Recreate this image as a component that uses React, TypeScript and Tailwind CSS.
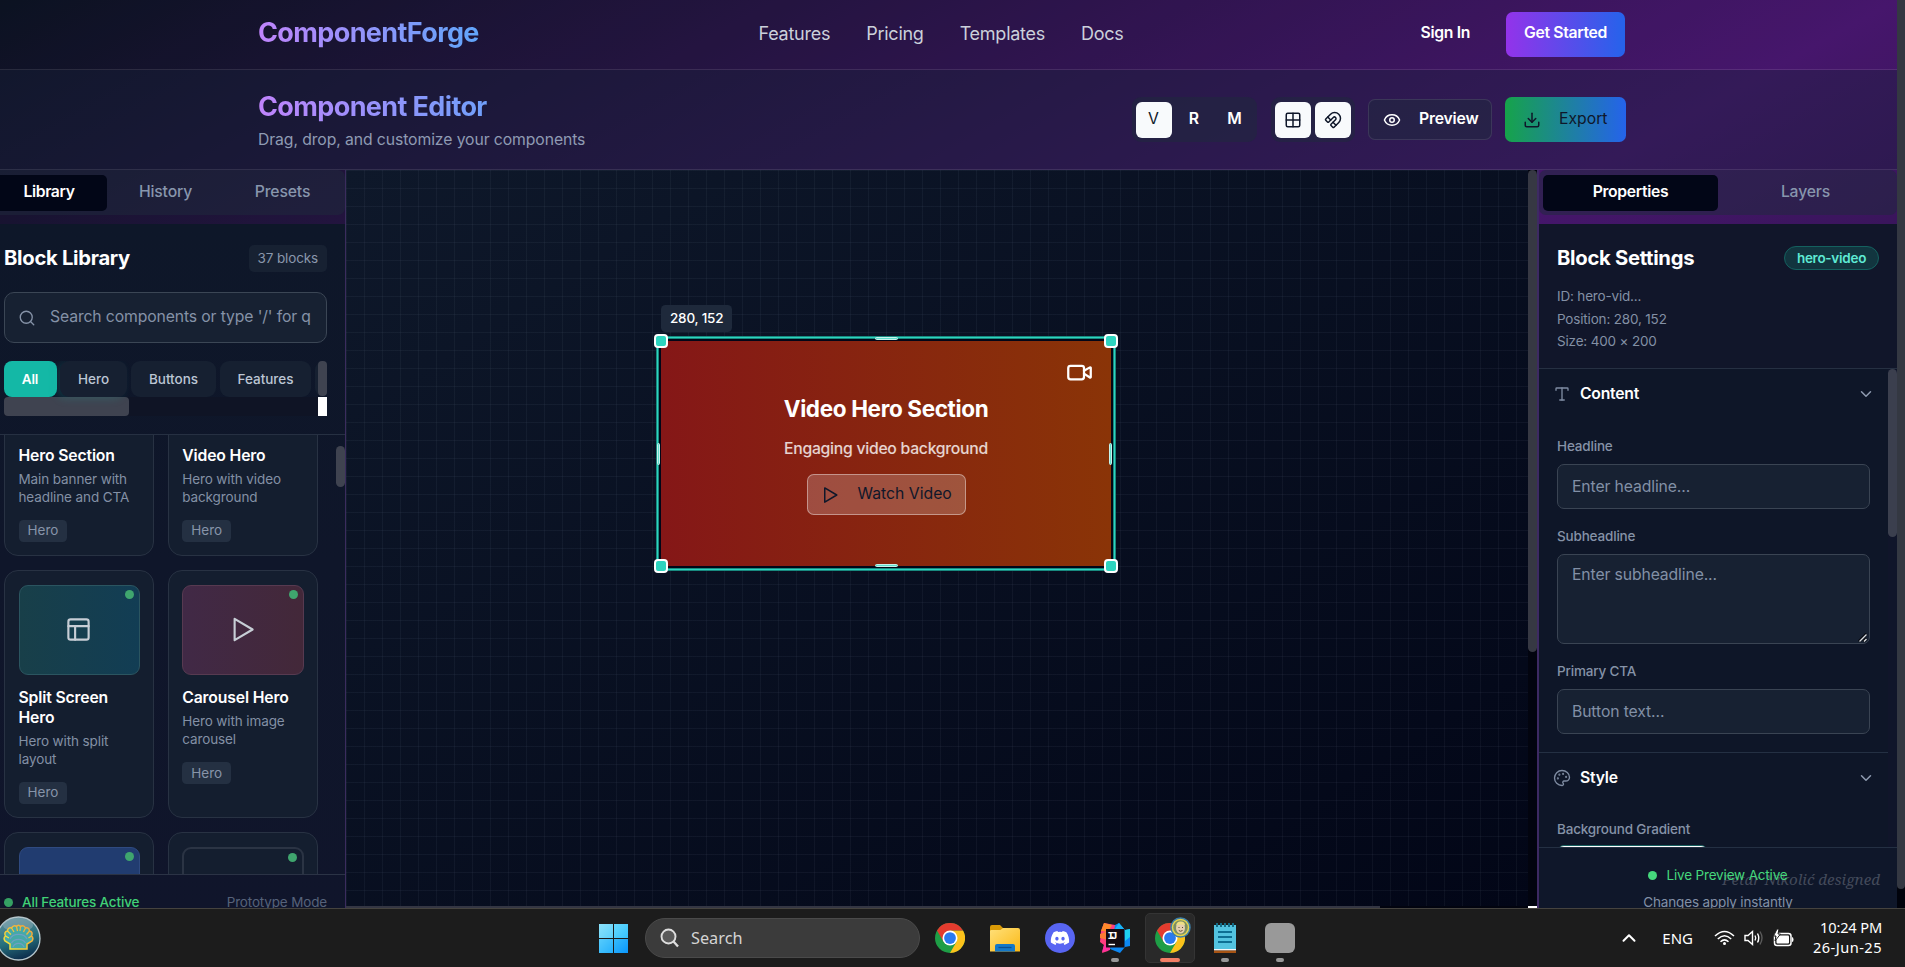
import React from "react";
import {
  ChevronDown,
  ChevronUp,
  Download,
  Eye,
  Grid2x2,
  Magnet,
  Palette,
  PanelsTopLeft,
  Play,
  Search,
  Type,
  Video,
} from "lucide-react";

/* ---------- header ---------- */

function SiteHeader() {
  return (
    <header className="flex h-[70px] w-[1897px] shrink-0 border-b border-white/10 bg-black/20">
      <div className="ml-[257px] flex w-[1368px] items-center justify-between pl-[1px]">
        <div className="w-[500px] pb-[3px]">
          <span className="inline-block bg-[linear-gradient(to_right,#c084fc,#60a5fa)] bg-clip-text text-[27px] leading-[36px] font-bold tracking-[-0.023em] text-transparent">
            ComponentForge
          </span>
        </div>
        <nav className="flex w-[366px] gap-[36px] pb-[2px] text-[18px] leading-[27px] tracking-[-0.014em] text-[#cbd0db]">
          <span>Features</span>
          <span>Pricing</span>
          <span>Templates</span>
          <span>Docs</span>
        </nav>
        <div className="flex w-[500px] items-center justify-end gap-[36px] pb-[1px] text-[15.75px] font-semibold tracking-[-0.022em] text-white">
          <span className="pb-[2px]">Sign In</span>
          <button className="flex h-[45px] w-[119px] items-center justify-center rounded-[6.75px] bg-[linear-gradient(to_right,#9333ea,#2563eb)] pb-[2px] whitespace-nowrap">
            Get Started
          </button>
        </div>
      </div>
    </header>
  );
}

function EditorHeader() {
  return (
    <div className="flex h-[100px] w-[1897px] shrink-0 border-b border-white/10 bg-[#0f172a]/50">
      <div className="ml-[257px] flex w-[1369px] items-center justify-between pl-[1px]">
        <div className="flex flex-col items-start">
          <h1 className="bg-[linear-gradient(to_right,#c084fc,#60a5fa_120%)] bg-clip-text text-[27px] leading-[36px] font-bold tracking-[-0.023em] text-transparent">
            Component Editor
          </h1>
          <p className="mt-[4px] text-[15.75px] leading-[22px] tracking-[-0.006em] text-[#8f9bb3]">
            Drag, drop, and customize your components
          </p>
        </div>
        <div className="flex items-center">
          <div className="flex h-[45px] items-center gap-[4.5px] rounded-[9px] bg-[#1e293b]/50 px-[4px] text-[15.75px] font-semibold text-white">
            <span className="flex h-[36px] w-[36px] items-center justify-center rounded-[6px] bg-[#f8fafc] pb-[2px] font-normal text-[#0f172a]">
              V
            </span>
            <span className="flex h-[36px] w-[36px] items-center justify-center pb-[2px]">R</span>
            <span className="flex h-[36px] w-[36px] items-center justify-center pb-[2px]">M</span>
          </div>
          <div className="ml-[14px] flex h-[45px] items-center gap-[4.5px] rounded-[9px] bg-[#1e293b]/50 px-[4px] text-[#0f172a]">
            <span className="flex h-[36px] w-[36px] items-center justify-center rounded-[6px] bg-[#f8fafc]">
              <Grid2x2 size={18} />
            </span>
            <span className="flex h-[36px] w-[36px] items-center justify-center rounded-[6px] bg-[#f8fafc]">
              <Magnet size={18} />
            </span>
          </div>
          <button className="ml-[13px] flex h-[41px] w-[124px] items-center rounded-[7px] border border-white/10 bg-[#1e293b]/50 pl-[14px] text-white">
            <Eye size={18} />
            <span className="ml-[18px] pb-[2px] text-[15.75px] font-semibold tracking-[-0.012em]">Preview</span>
          </button>
          <button className="ml-[13px] flex h-[45px] w-[121px] items-center rounded-[6.75px] bg-[linear-gradient(to_right,#16a34a,#2563eb)] pl-[18px] text-[#0f172a]">
            <Download size={18} />
            <span className="ml-[18px] pb-[2px] text-[15.75px]">Export</span>
          </button>
        </div>
      </div>
    </div>
  );
}

/* ---------- left sidebar ---------- */

type Block = {
  name: string;
  text: string;
  thumb: string;
  icon?: React.ReactNode;
};

const blocks: Block[] = [
  { name: "Hero Section", text: "Main banner with headline and CTA", thumb: "border bg-[#27325a]" },
  { name: "Video Hero", text: "Hero with video background", thumb: "border bg-[#4a2530]" },
  {
    name: "Split Screen Hero",
    text: "Hero with split layout",
    thumb: "border border-[#2b5560] bg-[linear-gradient(to_right,#183f49,#123d54)]",
    icon: <PanelsTopLeft size={27} strokeWidth={1.9} />,
  },
  {
    name: "Carousel Hero",
    text: "Hero with image carousel",
    thumb: "border border-[#573a50] bg-[linear-gradient(to_right,#412946,#432839)]",
    icon: (
      <svg width="27" height="27" viewBox="0 0 24 24" fill="none" stroke="currentColor" strokeWidth="1.9" strokeLinejoin="round">
        <path d="M5 2.500 21 12 5 21.500Z" />
      </svg>
    ),
  },
  { name: "Button", text: "Primary action", thumb: "border border-[#2f4a80] bg-[#213c70]" },
  { name: "Outline Button", text: "Secondary action", thumb: "border-2 border-[#2b3444]" },
];

function BlockCard({ block }: { block: Block }) {
  return (
    <div className="flex flex-col items-start rounded-[14px] border border-[#283243] bg-[#141e2f] p-[13.5px]">
      <div
        className={`flex h-[90px] w-full items-start justify-center rounded-[9px] text-[#c7ced6] ${block.thumb}`}
      >
        <div className="flex h-[88px] w-full items-center justify-center pl-[13px]">
          <div className="flex flex-1 justify-center">{block.icon}</div>
          <div className="mt-[4px] mr-[5px] h-[9px] w-[9px] shrink-0 self-start rounded-full bg-[#3fa56e]" />
        </div>
      </div>
      <h3 className="mt-[13.5px] text-[15.75px] leading-[19.7px] font-semibold tracking-[-0.01em] text-white">
        {block.name}
      </h3>
      <p className="mt-[4.5px] text-[13.5px] leading-[18px] tracking-[-0.008em] text-[#8390a5]">{block.text}</p>
      <span className="mt-[13.5px] flex h-[22px] items-center rounded-[4.5px] bg-[#243042] px-[9px] text-[13.5px] text-[#8794a9]">
        Hero
      </span>
    </div>
  );
}

function LibraryPanel() {
  return (
    <aside className="flex h-full w-[346px] shrink-0 flex-col overflow-hidden border-r border-[#3b2c5e]">
      <div className="h-[54px] shrink-0 bg-black/20">
        <div className="flex h-[45px] items-center rounded-r-[7px] bg-[#1e293b]/50 text-[15.75px] font-medium tracking-[-0.01em] text-[#8896ad]">
          <div className="flex h-[36px] w-[107px] items-center justify-center rounded-r-[5px] bg-[#020617] pr-[9px] pb-[2px] font-semibold tracking-[-0.025em] text-white">
            Library
          </div>
          <div className="flex w-[117px] justify-center pb-[2px]">History</div>
          <div className="flex w-[117px] justify-center pb-[2px]">Presets</div>
        </div>
      </div>

      <div className="flex min-h-0 flex-1 flex-col bg-[linear-gradient(#0e1729,#10152b)]">
        <div className="h-[211px] shrink-0 border-b border-[#263042] pr-[18px] pl-[4px]">
          <div className="flex h-[68px] items-center justify-between">
            <h2 className="text-[20.25px] font-bold tracking-[-0.015em] text-white">Block Library</h2>
            <span className="flex h-[27px] items-center rounded-[5px] bg-[#172132] px-[9px] text-[13.5px] tracking-[-0.01em] text-[#8a97ac]">
              37 blocks
            </span>
          </div>
          <div className="flex h-[51px] items-center overflow-hidden rounded-[10px] border border-[#3b4655] bg-[#172132] pl-[13px] whitespace-nowrap text-[#8592a7]">
            <Search size={18} strokeWidth={1.8} className="shrink-0" />
            <span className="ml-[14px] shrink-0 pb-[1px] text-[15.75px] leading-[24px] tracking-[-0.008em]">
              Search components or type '/' for q
            </span>
          </div>
          <div className="mt-[18px] flex">
            <div className="w-[314px] shrink-0 overflow-hidden">
              <div className="flex h-[36px] gap-[4px] text-[13.5px] leading-[36px] font-medium whitespace-nowrap text-[#bcc6d4]">
                <span className="w-[53px] shrink-0 rounded-[8px] bg-[#14b8a6] pr-[1px] text-center font-semibold tracking-[-0.01em] text-white">
                  All
                </span>
                <span className="-ml-[1px] w-[67px] shrink-0 rounded-[9px] bg-[#162031] text-center shadow-[-4px_2px_8px_rgba(20,184,166,0.18)]">
                  Hero
                </span>
                <span className="w-[85px] shrink-0 rounded-[9px] bg-[#162031] text-center">Buttons</span>
                <span className="w-[91px] shrink-0 rounded-[9px] bg-[#162031] text-center">Features</span>
                <span className="w-[60px] shrink-0 rounded-[9px] bg-[#162031]" />
              </div>
              <div className="h-[19px] bg-[#0f1425]">
                <div className="h-[19px] w-[125px] rounded-[4px] bg-[#3f4350]" />
              </div>
            </div>
            <div className="w-[9px]">
              <div className="h-[35px] rounded-[4px] bg-[#3f4350]" />
              <div className="mt-[1px] h-[19px] bg-white" />
            </div>
          </div>
        </div>

        <div className="flex h-[439px] shrink-0 overflow-hidden">
          <div className="-mt-[107.2px] grid h-[900px] w-[318px] shrink-0 auto-rows-min grid-cols-2 gap-x-[13.5px] gap-y-[14.1px] pl-[4px]">
            {blocks.map((block) => (
              <BlockCard key={block.name} block={block} />
            ))}
          </div>
          <div className="mt-[11px] ml-[18px] h-[41px] w-[9px] rounded-full bg-[#3f4350]" />
        </div>

        <div className="flex flex-1 items-start justify-between border-t border-[#2b3345] pt-[17px] pr-[18px] pl-[4px] text-[13.5px] leading-[20px] tracking-[-0.012em]">
          <span className="flex items-center gap-[9px] font-medium text-[#41d176]">
            <span className="h-[9px] w-[9px] rounded-full bg-[#35a163]" />
            All Features Active
          </span>
          <span className="text-[#56627a]">Prototype Mode</span>
        </div>
      </div>
    </aside>
  );
}

/* ---------- canvas ---------- */

function Handle({ place }: { place: string }) {
  return (
    <span
      className={`absolute h-[14px] w-[14px] rounded-[4px] border-2 border-white bg-[#2dd4bf] ${place}`}
    />
  );
}

function SelectedBlock() {
  return (
    <div className="absolute top-[171px] left-[315px] h-[225px] w-[450px] bg-[linear-gradient(to_right,#851717,#8a3407)] shadow-[0_0_0_2px_#020617,0_0_0_3px_#18897f,0_0_0_4px_#2dd4bf,0_0_0_5px_#18897f]">
      <div className="absolute -top-[36px] left-0 flex h-[27px] w-[71px] items-center rounded-[4.5px] bg-[#1e293b] pl-[9px] text-[13.5px] font-medium tracking-[-0.015em] whitespace-nowrap text-white">
        280, 152
      </div>
      <Video size={27} className="absolute top-[18px] right-[18px] text-white" />
      <div className="flex h-full flex-col items-center pt-[52px]">
        <h2 className="text-[22.5px] leading-[31px] font-bold tracking-[-0.016em] text-white">Video Hero Section</h2>
        <p className="mt-[14px] text-[15.75px] leading-[22px] font-medium tracking-[-0.017em] text-white/80">
          Engaging video background
        </p>
        <button className="mt-[14px] flex h-[41px] w-[159px] items-center rounded-[6.75px] border border-white/40 bg-white/20 pl-[13px] text-[15.75px] text-[#0f172a]">
          <svg width="18" height="18" viewBox="0 0 24 24" fill="none" stroke="currentColor" strokeWidth="2" strokeLinejoin="round">
            <path d="M5 2.500 21 12 5 21.500Z" />
          </svg>
          <span className="ml-[19px] pb-[2px] whitespace-nowrap">Watch Video</span>
        </button>
      </div>
      <span className="absolute -top-[4px] left-[214px] h-[3px] w-[23px] rounded-[2px] border border-[#c6f3ec] bg-[#5fdccb]" />
      <span className="absolute -bottom-[1px] left-[214px] h-[3px] w-[23px] rounded-[2px] border border-[#c6f3ec] bg-[#5fdccb]" />
      <span className="absolute top-[102px] -left-[4px] h-[22px] w-[3px] rounded-[2px] border border-[#c6f3ec] bg-[#5fdccb]" />
      <span className="absolute top-[102px] -right-[1px] h-[22px] w-[3px] rounded-[2px] border border-[#c6f3ec] bg-[#5fdccb]" />
      <Handle place="-top-[7px] -left-[7px]" />
      <Handle place="-top-[7px] -right-[7px]" />
      <Handle place="-bottom-[7px] -left-[7px]" />
      <Handle place="-bottom-[7px] -right-[7px]" />
    </div>
  );
}

function Canvas() {
  return (
    <main className="flex h-full w-[1191px] shrink-0 flex-col bg-[#02040f]">
      <div className="flex h-[736px]">
        <div className="relative h-full w-[1182px] overflow-hidden bg-[linear-gradient(to_bottom_right,#0e182a,#020617)]">
          <div className="absolute inset-0 bg-[linear-gradient(rgba(148,163,184,0.065)_1px,transparent_1px),linear-gradient(90deg,rgba(148,163,184,0.065)_1px,transparent_1px)] bg-[length:18px_18px]" />
          <SelectedBlock />
        </div>
        <div className="w-[9px]">
          <div className="h-[482px] rounded-full bg-[#363843]" />
        </div>
      </div>
      <div className="flex h-[2px] justify-between">
        <div className="w-[1034px] bg-[#343643]" />
        <div className="w-[9px] bg-white" />
      </div>
    </main>
  );
}

/* ---------- right sidebar ---------- */

function SectionTitle({ icon, title }: { icon: React.ReactNode; title: string }) {
  return (
    <div className="flex h-[49px] items-center pr-[13px] pl-[14px]">
      <span className="flex w-[18px] justify-center text-[#7f8ca2]">{icon}</span>
      <span className="ml-[9px] text-[15.75px] font-semibold tracking-[-0.015em] text-white">{title}</span>
      <ChevronDown size={18} className="ml-auto text-[#8f9bb0]" />
    </div>
  );
}

function Field({ label, hint, tall }: { label: string; hint: string; tall?: boolean }) {
  return (
    <div className="mb-[18px]">
      <div className="mb-[9px] text-[13.5px] leading-[18px] font-medium tracking-[-0.013em] text-[#8592a7]">
        {label}
      </div>
      <div
        className={`relative rounded-[7px] border border-[#3a4453] bg-[#172132] px-[14px] text-[15.75px] leading-[24px] tracking-[-0.008em] text-[#8290a6] ${
          tall ? "h-[90px] pt-[8px]" : "h-[45px] pt-[10px]"
        }`}
      >
        {hint}
        {tall && (
          <svg className="absolute right-[1px] bottom-[1px]" width="10" height="9" viewBox="0 0 10 9">
            <path d="M1 8.5 8.5 1M5.5 8.5 8.5 5.5" stroke="#05070d" strokeWidth="3" />
            <path d="M1.5 8.5 8.5 1.5M6 8.5 8.5 6" stroke="#d8dce2" strokeWidth="1.4" />
          </svg>
        )}
      </div>
    </div>
  );
}

function PropertiesPanel() {
  return (
    <aside className="flex h-full w-[360px] shrink-0 flex-col overflow-hidden border-l-2 border-[#3d2a63]">
      <div className="h-[54px] shrink-0 bg-black/20">
        <div className="flex h-[45px] items-center rounded-[7px] bg-[#1e293b]/50 px-[4px] text-[15.75px] font-medium tracking-[-0.01em] text-[#8896ad]">
          <div className="flex h-[36px] w-[175px] items-center justify-center rounded-[5px] bg-[#020617] pb-[2px] font-semibold tracking-[-0.022em] text-white">
            Properties
          </div>
          <div className="flex flex-1 justify-center pb-[2px]">Layers</div>
        </div>
      </div>

      <div className="h-[145px] shrink-0 border-b border-[#263042] bg-[#11162a] px-[18px] pt-[20px]">
        <div className="flex h-[28px] items-center justify-between">
          <h2 className="text-[20.25px] font-bold tracking-[-0.015em] text-white">Block Settings</h2>
          <span className="flex h-[24px] w-[95px] items-center justify-center rounded-full border border-[#14615f] bg-[#12353f] text-[13.5px] font-semibold tracking-[-0.02em] text-[#5eead4]">
            hero-video
          </span>
        </div>
        <div className="mt-[13px] text-[13.5px] leading-[22.5px] tracking-[-0.013em] text-[#8390a5]">
          <p>ID: hero-vid...</p>
          <p>Position: 280, 152</p>
          <p>Size: 400 × 200</p>
        </div>
      </div>

      <div className="flex h-[478px] shrink-0 overflow-hidden bg-[#0e1628]">
        <div className="w-[349px]">
          <div className="h-[384px] border-b border-[#243043]">
            <SectionTitle icon={<Type size={18} strokeWidth={1.8} />} title="Content" />
            <div className="pt-[18.5px] pr-[18px] pl-[18px]">
              <Field label="Headline" hint="Enter headline..." />
              <Field label="Subheadline" hint="Enter subheadline..." tall />
              <Field label="Primary CTA" hint="Button text..." />
            </div>
          </div>
          <SectionTitle icon={<Palette size={18} strokeWidth={1.8} />} title="Style" />
          <div className="pt-[18px] pl-[18px]">
            <div className="text-[13.5px] leading-[18px] font-medium tracking-[-0.013em] text-[#8592a7]">
              Background Gradient
            </div>
            <div className="mt-[7px] h-[45px] w-[151px] rounded-[7px] border border-[#17605f] bg-white" />
          </div>
        </div>
        <div className="w-[9px] bg-[#10152a]">
          <div className="h-[168px] rounded-full bg-[#3b3f4e]" />
        </div>
      </div>

      <div className="relative flex flex-1 flex-col items-center overflow-hidden border-t border-[#243043] bg-[#0f172a] pt-[18px] text-[13.5px] leading-[18px] tracking-[-0.012em]">
        <div className="absolute top-[20px] right-[17px] font-['Noto_Serif','DejaVu_Serif',serif] text-[15.2px] leading-[22px] tracking-normal whitespace-nowrap text-[#434a5a] italic">
          Petar Nikolić designed
        </div>
        <span className="relative flex items-center gap-[9px] text-[#45d87c]">
          <span className="h-[9px] w-[9px] rounded-full bg-[#45d87c]" />
          Live Preview Active
        </span>
        <span className="relative mt-[9px] text-[#8290a6]">Changes apply instantly</span>
      </div>
    </aside>
  );
}

/* ---------- taskbar ---------- */

function ChromeIcon() {
  return (
    <svg width="30" height="30" viewBox="0 0 48 48" className="shrink-0">
      <circle cx="24" cy="24" r="24" fill="#1e9e46" />
      <path d="M24 12H44.8A24 24 0 0 1 24 48L34.4 30Z" fill="#fcc21b" />
      <path d="M3.2 12 13.6 30 24 24 24 12H44.8A24 24 0 0 0 3.2 12Z" fill="#e33b2e" />
      <circle cx="24" cy="24" r="12" fill="#fff" />
      <circle cx="24" cy="24" r="9.4" fill="#2a7af0" />
    </svg>
  );
}

function FolderIcon() {
  return (
    <svg width="30" height="30" viewBox="0 0 30 30">
      <path d="M0 4Q0 2 2 2H10L13 5H26V12H0Z" fill="#d99a06" />
      <path d="M0 8Q0 7 1.5 7H10.5L13 5H28Q30 5 30 7V28.5H0Z" fill="url(#folderFill)" />
      <path d="M5 28.5V23Q5 21 7 21H23Q25 21 25 23V28.5Z" fill="#1478c8" />
      <path d="M8.5 24.5H21.5" stroke="#0b4f92" strokeWidth="1.3" />
      <defs>
        <linearGradient id="folderFill" x1="0" y1="0" x2="1" y2="1">
          <stop offset="0" stopColor="#ffe07a" />
          <stop offset="1" stopColor="#fbb916" />
        </linearGradient>
      </defs>
    </svg>
  );
}

function DiscordIcon() {
  return (
    <svg width="30" height="30" viewBox="0 0 30 30">
      <circle cx="15" cy="15" r="15" fill="#5865f2" />
      <g transform="translate(5.8 5.8) scale(0.765)">
        <path
          fill="#fff"
          d="M20.317 4.37a19.8 19.8 0 0 0-4.885-1.515c-.21.375-.455.88-.608 1.25a18.3 18.3 0 0 0-5.487 0c-.16-.39-.405-.875-.617-1.25A19.7 19.7 0 0 0 3.677 4.37C.533 9.046-.32 13.58.1 18.058a19.9 19.9 0 0 0 5.993 3.03c.46-.63.873-1.295 1.226-1.994a12 12 0 0 1-1.872-.892l.372-.292a14.2 14.2 0 0 0 12.36 0l.373.292a12 12 0 0 1-1.873.892c.36.698.772 1.362 1.225 1.993a19.8 19.8 0 0 0 6.002-3.03c.5-5.177-.838-9.674-3.589-13.66ZM8.02 15.33c-1.183 0-2.157-1.085-2.157-2.419s.956-2.419 2.157-2.419c1.21 0 2.176 1.096 2.157 2.42 0 1.333-.956 2.418-2.157 2.418Zm7.975 0c-1.183 0-2.157-1.085-2.157-2.419s.955-2.419 2.157-2.419c1.21 0 2.176 1.096 2.157 2.42 0 1.333-.946 2.418-2.157 2.418Z"
        />
      </g>
    </svg>
  );
}

function IdeaIcon() {
  return (
    <svg width="30" height="30" viewBox="0 0 30 30">
      <path d="M4 0 15 2 17 15 8 28 2 30 4 22 0 19 1 8Z" fill="#ff3d7f" />
      <path d="M4 0 12 2 8 9 1 8Z" fill="#ff8a2b" />
      <path d="M0 11 8 8 8 17 0 15Z" fill="#fb7c35" />
      <path d="M2 29 4 22 10 20 10 27Z" fill="#ff2fa0" />
      <path d="M15 2 19 0 25 7 30 6 30 23 25 24 20 30 10 26 13 14Z" fill="#0d87f2" />
      <path d="M19 0 25 7 24 14 15 6Z" fill="#18b4f5" />
      <path d="M25 7 30 6 30 14 25 18Z" fill="#1ed0f0" />
      <rect x="6" y="6" width="18.500" height="18.500" fill="#120b12" />
      <path d="M8.500 21.500H15" stroke="#fff" strokeWidth="1.400" />
      <text
        x="7.600"
        y="15.800"
        fill="#fff"
        fontSize="11"
        fontWeight="700"
        fontFamily="'Liberation Mono', monospace"
        textLength="10"
      >
        IJ
      </text>
    </svg>
  );
}

function NotepadIcon() {
  return (
    <svg width="22" height="30" viewBox="0 0 22 30">
      <rect x="0" y="2" width="22" height="25" fill="#53c3e0" />
      <rect x="0" y="26" width="22" height="1.600" fill="#f3f6f8" />
      <rect x="0" y="27.600" width="22" height="2.400" fill="#a65313" />
      <path d="M3 0V4M7 0V4M11 0V4M15 0V4M19 0V4" stroke="#146c86" strokeWidth="2" />
      <path d="M4 9H18M4 14H18M4 19H18" stroke="#0d6f93" strokeWidth="1.800" />
    </svg>
  );
}

function ShellIcon() {
  return (
    <svg width="45" height="45" viewBox="0 0 45 45">
      <defs>
        <linearGradient id="sea" x1="0.3" y1="0" x2="0.6" y2="1">
          <stop offset="0" stopColor="#5f8f9c" />
          <stop offset="0.55" stopColor="#27707c" />
          <stop offset="1" stopColor="#0b2a4a" />
        </linearGradient>
        <linearGradient id="rim" x1="0" y1="1" x2="1" y2="0">
          <stop offset="0" stopColor="#f4ea3c" />
          <stop offset="1" stopColor="#f39a3a" />
        </linearGradient>
      </defs>
      <circle cx="22.500" cy="22.500" r="21.500" fill="url(#sea)" stroke="#b5c6cc" strokeWidth="1.300" />
      <ellipse cx="22" cy="9" rx="15" ry="7" fill="#9ab4bc" opacity="0.45" />
      <path
        d="M14 33V28L9 25Q7 22 9.500 20Q7.500 16 11.500 15Q12 11 15.500 12Q18 8.500 20.500 10.500Q22.500 8 24.500 10.500Q27.500 8.500 29.500 12Q33 11 33.500 15Q37.500 16 35.500 20Q38 22 36 25L31 28V33Z"
        fill="#45a9a8"
        stroke="url(#rim)"
        strokeWidth="1.500"
      />
      <path
        d="M15.500 12 18 16M20.500 10.500 21.500 15M24.500 10.500 24 15M29.500 12 27.500 16M11.500 15 15 18.500M33.500 15 30.500 18.500M9.500 20 13 22M35.500 20 32.500 22"
        stroke="url(#rim)"
        strokeWidth="1.200"
      />
      <path
        d="M17 31a6 6 0 0 1 11 0M15.500 27a8 7 0 0 1 14 0M14 23a9 7 0 0 1 17 0"
        fill="none"
        stroke="#6f9fc4"
        strokeWidth="1.300"
      />
    </svg>
  );
}

function AppSlot({ children, mark }: { children: React.ReactNode; mark?: string }) {
  return (
    <div className="flex h-[50px] w-[55px] flex-col items-center pt-[10px]">
      {children}
      {mark && <span className={`mt-[5px] h-[4px] shrink-0 rounded-full ${mark}`} />}
    </div>
  );
}

function Taskbar() {
  return (
    <footer className="flex h-[59px] w-[1905px] shrink-0 items-start border-t border-[#45433f] bg-[#1c1c1c] pt-[4px] font-['Noto_Sans','Open_Sans',sans-serif] text-white">
      <div className="-ml-[4px] flex w-[603px] pt-[3px]">
        <ShellIcon />
      </div>
      <div className="mt-[11px] grid h-[29px] w-[29px] grid-cols-2 gap-[1px]">
        <span className="bg-[linear-gradient(135deg,#8ce2fb,#5cd0fb)]" />
        <span className="bg-[linear-gradient(135deg,#66daff,#36c0fb)]" />
        <span className="bg-[linear-gradient(135deg,#57ccfc,#26b0fc)]" />
        <span className="bg-[linear-gradient(135deg,#36bbfb,#0a96fb)]" />
      </div>
      <div className="mt-[5px] ml-[17px] flex h-[40px] w-[275px] items-center rounded-full border border-[#4a4a4a] bg-[#3b3b3b] pl-[14px]">
        <svg width="20" height="20" viewBox="0 0 20 20" fill="none">
          <circle cx="8.500" cy="8.500" r="7" fill="#5a5a5a" stroke="#dedede" strokeWidth="1.900" />
          <path d="M13.500 13.500 18 18.500" stroke="#dedede" strokeWidth="2.300" />
        </svg>
        <span className="ml-[11px] pt-[1px] text-[16.300px] text-[#d4d4d4]">Search</span>
      </div>
      <div className="ml-[2px] flex">
        <AppSlot>
          <ChromeIcon />
        </AppSlot>
        <AppSlot>
          <FolderIcon />
        </AppSlot>
        <AppSlot>
          <DiscordIcon />
        </AppSlot>
        <AppSlot mark="w-[8px] bg-[#989898]">
          <IdeaIcon />
        </AppSlot>
        <div className="relative mx-[2.5px] flex h-[50px] w-[50px] flex-col items-center rounded-[5px] border border-[#343434] bg-[#292929] pt-[9px]">
          <ChromeIcon />
          <span className="mt-[5px] h-[4px] w-[20px] shrink-0 rounded-full bg-[#f37e65]" />
          <svg className="absolute top-[3px] right-[3px]" width="21" height="21" viewBox="0 0 21 21">
            <circle cx="10.500" cy="10.500" r="9.500" fill="#4d84a8" stroke="#3d7fa8" strokeWidth="1.500" />
            <circle cx="10.500" cy="10.500" r="8" fill="#7d8f62" stroke="#e5d44e" strokeWidth="1.500" />
            <ellipse cx="10.500" cy="11" rx="4.500" ry="5.500" fill="#e6cfae" />
            <path d="M6 8.500Q7 4 11 4.500Q15 4.500 15 8.500Q12 6.500 6 8.500Z" fill="#efdf86" />
            <path d="M8.500 10.500H9.500M12 10.500H13M8.800 13.500Q10.500 15 12.500 13.500" stroke="#5a4632" fill="none" />
          </svg>
        </div>
        <AppSlot mark="w-[8px] bg-[#989898]">
          <NotepadIcon />
        </AppSlot>
        <AppSlot mark="w-[8px] bg-[#989898]">
          <span className="h-[30px] w-[30px] shrink-0 rounded-[6px] bg-[#999999]" />
        </AppSlot>
      </div>
      <div className="mr-[23px] ml-auto flex h-[50px] items-center">
        <ChevronUp size={22} strokeWidth={2.2} />
        <span className="ml-[22px] text-[15px]">ENG</span>
        <svg className="ml-[21px]" width="21" height="16" viewBox="0 0 21 16" fill="none" stroke="#fff" strokeWidth="1.500">
          <path d="M1 6Q10.500 -3 20 6M3.800 9Q10.500 2.500 17.200 9M6.500 11.800Q10.500 8 14.500 11.800" />
          <circle cx="10.500" cy="13.500" r="1.500" fill="#fff" stroke="none" />
        </svg>
        <svg className="ml-[9px]" width="20" height="18" viewBox="0 0 20 18" fill="none" stroke="#fff" strokeWidth="1.400">
          <path d="M1 6.500H4L8.500 2.500V15.500L4 11.500H1Z" />
          <path d="M11 6.500Q12.500 9 11 11.500M13.500 4.500Q16 9 13.500 13.500" />
          <path d="M16 2.500Q20 9 16 15.500" stroke="#5a5a5a" />
        </svg>
        <svg className="ml-[9px]" width="21" height="18" viewBox="0 0 21 18">
          <rect x="1.500" y="4.500" width="16.500" height="12" rx="2.500" fill="none" stroke="#fff" strokeWidth="1.500" />
          <rect x="3.500" y="6.500" width="12.500" height="8" rx="1" fill="#fff" />
          <path d="M19 8Q20.500 8 20.500 10.500Q20.500 13 19 13Z" fill="#fff" />
          <path d="M4 0 0.500 7H3L2 12 7.500 5H5L6 0Z" fill="#fff" stroke="#1c1c1c" strokeWidth="1" />
        </svg>
        <div className="ml-[19px] pb-[2px] text-right text-[14.600px] leading-[20px]">
          <div className="tracking-[-0.010em]">10:24 PM</div>
          <div className="tracking-[0.032em]">26-Jun-25</div>
        </div>
      </div>
    </footer>
  );
}

export default function App() {
  return (
    <div className="flex h-[967px] w-[1905px] flex-col overflow-hidden bg-[#020617] font-['Inter',sans-serif] antialiased">
      <div className="flex h-[908px] shrink-0 overflow-hidden">
        <div className="flex w-[1897px] shrink-0 flex-col bg-[linear-gradient(to_bottom_right,#0f172a,#581c87,#0f172a)] bg-[length:1897px_1050px] bg-no-repeat">
          <SiteHeader />
          <EditorHeader />
          <div className="flex h-[738px] shrink-0">
            <LibraryPanel />
            <Canvas />
            <PropertiesPanel />
          </div>
        </div>
        <div className="w-[8px] bg-[#01030c]">
          <div className="h-[889px] rounded-b-full bg-[#343842]" />
        </div>
      </div>
      <Taskbar />
    </div>
  );
}
